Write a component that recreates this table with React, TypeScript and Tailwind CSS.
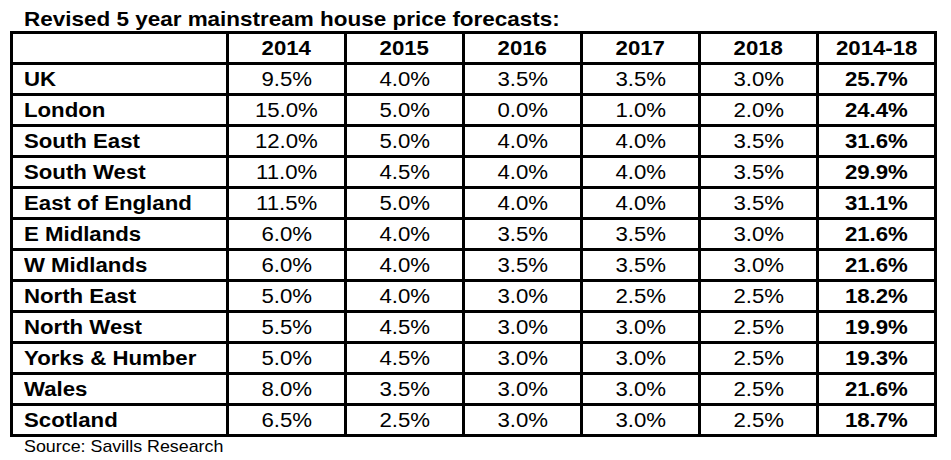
import React from 'react';

const years = ['2014', '2015', '2016', '2017', '2018', '2014-18'];

const rows: [string, string[]][] = [
  ['UK', ['9.5%', '4.0%', '3.5%', '3.5%', '3.0%', '25.7%']],
  ['London', ['15.0%', '5.0%', '0.0%', '1.0%', '2.0%', '24.4%']],
  ['South East', ['12.0%', '5.0%', '4.0%', '4.0%', '3.5%', '31.6%']],
  ['South West', ['11.0%', '4.5%', '4.0%', '4.0%', '3.5%', '29.9%']],
  ['East of England', ['11.5%', '5.0%', '4.0%', '4.0%', '3.5%', '31.1%']],
  ['E Midlands', ['6.0%', '4.0%', '3.5%', '3.5%', '3.0%', '21.6%']],
  ['W Midlands', ['6.0%', '4.0%', '3.5%', '3.5%', '3.0%', '21.6%']],
  ['North East', ['5.0%', '4.0%', '3.0%', '2.5%', '2.5%', '18.2%']],
  ['North West', ['5.5%', '4.5%', '3.0%', '3.0%', '2.5%', '19.9%']],
  ['Yorks & Humber', ['5.0%', '4.5%', '3.0%', '3.0%', '2.5%', '19.3%']],
  ['Wales', ['8.0%', '3.5%', '3.0%', '3.0%', '2.5%', '21.6%']],
  ['Scotland', ['6.5%', '2.5%', '3.0%', '3.0%', '2.5%', '18.7%']],
];

export default function App() {
  return (
    <div className="w-[951px] h-[460px] bg-white text-black font-['Liberation_Sans',Arial,sans-serif] pt-[6px] pl-[10px]">
      <h1 className="pl-[14px] text-[21px] font-bold leading-[25px]">
        <span className="inline-block origin-left scale-x-[1.07]">
          Revised 5 year mainstream house price forecasts:
        </span>
      </h1>
      <table className="border-collapse border-[3px] border-black">
        <thead>
          <tr className="h-[31px]">
            <th className="w-[216px] border-[3px] border-black" />
            {years.map((y) => (
              <th key={y} className="w-[118px] border-[3px] border-black text-[20px] font-bold leading-none text-center">
                <span className="inline-block scale-x-[1.11]">{y}</span>
              </th>
            ))}
          </tr>
        </thead>
        <tbody>
          {rows.map(([name, vals]) => (
            <tr key={name} className="h-[31px]">
              <td className="border-[3px] border-black pl-[11px] text-[20px] font-bold leading-none text-left">
                <span className="inline-block origin-left scale-x-[1.11]">{name}</span>
              </td>
              {vals.map((v, i) => (
                <td
                  key={i}
                  className={
                    i === 5
                      ? 'border-[3px] border-black text-[20px] font-bold leading-none text-center'
                      : 'border-[3px] border-black text-[20px] leading-none text-center'
                  }
                >
                  <span className="inline-block scale-x-[1.11]">{v}</span>
                </td>
              ))}
            </tr>
          ))}
        </tbody>
      </table>
      <p className="pl-[14px] text-[17px] leading-[20px]">
        <span className="inline-block origin-left scale-x-[1.05]">Source: Savills Research</span>
      </p>
    </div>
  );
}
